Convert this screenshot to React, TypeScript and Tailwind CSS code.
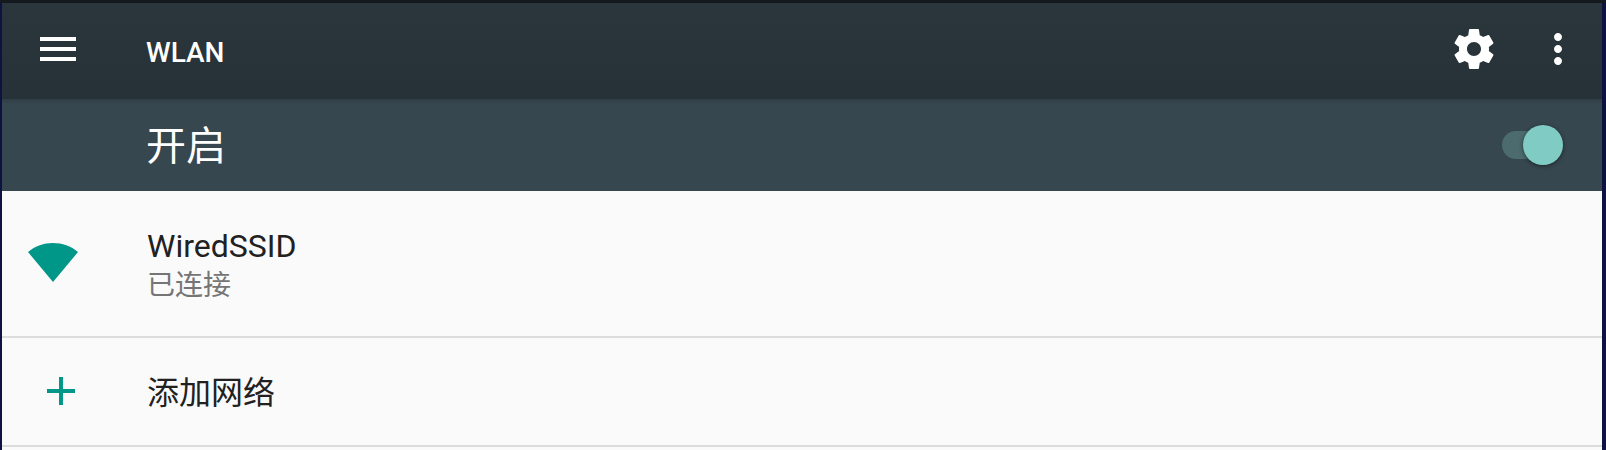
const font = "font-['Roboto','Noto_Sans_CJK_SC',sans-serif]";

function Toggle() {
  return (
    <div className="relative w-[61px] h-[40px] mr-[39px]">
      <div className="absolute left-0 top-[6px] w-[56px] h-[28px] rounded-full bg-[#4b6b6e]" />
      <div className="absolute right-0 top-0 w-[40px] h-[40px] rounded-full bg-[#80cbc4] shadow-[0_1px_4px_rgba(0,0,0,0.5)]" />
    </div>
  );
}

export default function App() {
  return (
    <div className={`${font} w-[1606px] h-[450px] bg-[#0d1240] overflow-hidden`}>
      <div className="h-[3px] bg-[#14191d]" />
      <div className="ml-[2px] mr-[4px] bg-[#fafafa] h-[447px]">
        <header className="h-[96px] bg-gradient-to-b from-[#2b363c] to-[#263238] flex items-center text-white">
          <svg width="48" height="48" viewBox="0 0 24 24" fill="#fff" className="ml-[32px] -mt-[4px]">
            <path d="M3 18h18v-2H3v2zm0-5h18v-2H3v2zm0-7v2h18V6H3z" />
          </svg>
          <h1 className="ml-[64px] mt-[3px] text-[28px] font-medium leading-none">WLAN</h1>
          <svg width="48" height="48" viewBox="0 0 24 24" fill="#fff" className="ml-auto -mt-[4px]">
            <path d="M19.43 12.98c.04-.32.07-.64.07-.98s-.03-.66-.07-.98l2.11-1.65c.19-.15.24-.42.12-.64l-2-3.46c-.12-.22-.39-.3-.61-.22l-2.49 1c-.52-.4-1.08-.73-1.69-.98l-.38-2.65C14.46 2.18 14.25 2 14 2h-4c-.25 0-.46.18-.49.42l-.38 2.65c-.61.25-1.17.59-1.69.98l-2.49-1c-.23-.09-.49 0-.61.22l-2 3.46c-.13.22-.07.49.12.64l2.11 1.65c-.04.32-.07.65-.07.98s.03.66.07.98l-2.11 1.65c-.19.15-.24.42-.12.64l2 3.46c.12.22.39.3.61.22l2.49-1c.52.4 1.08.73 1.69.98l.38 2.65c.03.24.24.42.49.42h4c.25 0 .46-.18.49-.42l.38-2.65c.61-.25 1.17-.59 1.69-.98l2.49 1c.23.09.49 0 .61-.22l2-3.46c.12-.22.07-.49-.12-.64l-2.11-1.65zM12 15.5c-1.93 0-3.5-1.57-3.5-3.5s1.57-3.5 3.5-3.5 3.5 1.57 3.5 3.5-1.57 3.5-3.5 3.5z" />
          </svg>
          <svg width="48" height="48" viewBox="0 0 24 24" fill="#fff" className="ml-[36px] mr-[20px] -mt-[4px]">
            <path d="M12 8c1.1 0 2-.9 2-2s-.9-2-2-2-2 .9-2 2 .9 2 2 2zm0 2c-1.1 0-2 .9-2 2s.9 2 2 2 2-.9 2-2-.9-2-2-2zm0 6c-1.1 0-2 .9-2 2s.9 2 2 2 2-.9 2-2-.9-2-2-2z" />
          </svg>
        </header>
        <div className="h-[92px] bg-[#37474f] flex items-center justify-between text-white relative">
          <div className="absolute inset-x-0 top-0 h-[5px] bg-gradient-to-b from-[#303e45] to-transparent" />
          <span className="ml-[144px] mt-[4px] text-[40px] leading-none">开启</span>
          <Toggle />
        </div>
        <div className="h-[147px] flex border-b-2 border-[#dcdcdc]">
          <div className="w-[145px] shrink-0 pl-[26px] pt-[52px]">
            <svg width="50" height="39" viewBox="0 0 50 39" fill="#009688">
              <path d="M0 9C14-3 36-3 50 9L25 39Z" />
            </svg>
          </div>
          <div className="pt-[35px]">
            <div className="text-[32px] leading-[40px] text-[#212121]">WiredSSID</div>
            <div className="text-[28px] leading-[36px] mt-[2px] text-[#757575]">已连接</div>
          </div>
        </div>
        <div className="h-[109px] flex items-center border-b-2 border-[#dcdcdc]">
          <div className="w-[145px] shrink-0 pl-[45px] -mt-[1px]">
            <svg width="28" height="28" viewBox="0 0 28 28" fill="#009688">
              <path d="M12 0h4v12h12v4H16v12h-4V16H0v-4h12z" />
            </svg>
          </div>
          <span className="mt-[2px] text-[32px] leading-none text-[#212121]">添加网络</span>
        </div>
      </div>
    </div>
  );
}
